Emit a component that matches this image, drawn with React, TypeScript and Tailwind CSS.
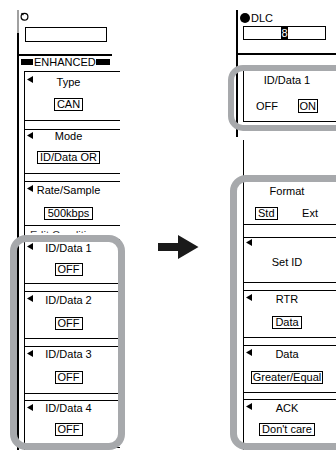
import React from "react";

function Tri({ top = "top-[3px]" }: { top?: string }) {
  return (
    <svg width="6" height="7" viewBox="0 0 6 7" className={`absolute left-[2px] ${top}`}>
      <polygon points="0,3.5 6,0 6,7" fill="#000" />
    </svg>
  );
}

type BoxProps = {
  title: string;
  value: string;
  h: string;
  mt?: string;
  titleMt?: string;
  valueMt?: string;
  tri?: boolean;
  triTop?: string;
  pr?: string;
  valuePx?: string;
};

function MenuBox({
  title,
  value,
  h,
  mt = "",
  titleMt = "mt-[2px]",
  valueMt = "mt-[10px]",
  tri = true,
  triTop = "top-[3px]",
  pr = "pr-[8px]",
  valuePx = "px-[2px]",
}: BoxProps) {
  return (
    <div className={`relative shrink-0 border-y border-black flex flex-col items-center ${h} ${mt} ${pr}`}>
      {tri && <Tri top={triTop} />}
      <div className={`h-[13px] leading-[13px] whitespace-nowrap ${titleMt}`}>{title}</div>
      <div
        className={`h-[13px] border border-black leading-[11px] flex items-center whitespace-nowrap ${valuePx} ${valueMt}`}
      >
        {value}
      </div>
    </div>
  );
}

export default function App() {
  return (
    <div className="relative w-[336px] h-[450px] overflow-hidden bg-white text-black text-[11px] flex font-['Liberation_Sans',Arial,sans-serif]">
      {/* LEFT PANEL */}
      <div className="ml-[17px] w-[103px] h-full pt-[10px] flex shrink-0">
        <div className="w-[2px] flex flex-col shrink-0">
          <div className="h-[23px] bg-[#a0a0a0]" />
          <div className="flex-1 bg-black" />
        </div>
        <div className="w-[101px] flex flex-col">
          <svg width="9" height="9" viewBox="0 0 9 9" className="mt-[2px] ml-[1px] shrink-0">
            <circle cx="4.5" cy="4.8" r="3.4" fill="none" stroke="#000" strokeWidth="1.2" />
            <line x1="1.6" y1="1.2" x2="3.4" y2="3.2" stroke="#000" strokeWidth="1.2" />
          </svg>
          <div className="mt-[6px] ml-[6px] w-[82px] h-[15px] border border-black shrink-0" />
          <div className="mt-[12px] w-[93px] h-[2px] bg-black shrink-0" />
          <div className="ml-[2px] h-[12px] flex items-center shrink-0">
            <div className="w-[12px] h-[6px] bg-black" />
            <span className="ml-[1px] leading-none whitespace-nowrap">ENHANCED</span>
            <div className="w-[14px] h-[6px] bg-black" />
          </div>
          <div className="mt-[3px] ml-[5px] flex-1 border-l border-black flex flex-col">
            <MenuBox title="Type" value="CAN" h="h-[50px]" titleMt="mt-[4px]" valueMt="mt-[9px]" triTop="top-[4px]" />
            <MenuBox title="Mode" value="ID/Data OR" h="h-[45px]" mt="mt-[8px]" titleMt="mt-0" valueMt="mt-[8px]" triTop="top-[2px]" />
            <MenuBox title="Rate/Sample" value="500kbps" h="h-[45px]" mt="mt-[7px]" valuePx="px-[3px]" />
            <div className="mt-[4px] h-[3px] overflow-hidden shrink-0">
              <div className="ml-[5px] leading-[11px] text-[#333] whitespace-nowrap">Edit Condition</div>
            </div>
            <MenuBox title="ID/Data 1" value="OFF" h="h-[45px]" mt="mt-[6px]" valueMt="mt-[8px]" />
            <MenuBox title="ID/Data 2" value="OFF" h="h-[48px]" mt="mt-[7px]" />
            <MenuBox title="ID/Data 3" value="OFF" h="h-[48px]" mt="mt-[7px]" titleMt="mt-[1px]" />
            <MenuBox title="ID/Data 4" value="OFF" h="h-[48px]" mt="mt-[6px]" titleMt="mt-[1px]" valueMt="mt-[8px]" />
          </div>
        </div>
      </div>

      {/* ARROW */}
      <div className="w-[116px] shrink-0 pt-[235px] pl-[38px]">
        <svg width="41" height="24" viewBox="0 0 41 24">
          <polygon points="0,8 20,8 20,0 40.5,12 20,24 20,16 0,16" fill="#1a1a1a" />
        </svg>
      </div>

      {/* RIGHT PANEL */}
      <div className="w-[100px] h-full pt-[10px] flex shrink-0">
        <div className="w-[2px] h-[127px] bg-black shrink-0" />
        <div className="w-[98px] flex flex-col">
          <div className="mt-[3px] ml-[2px] h-[10px] flex items-center shrink-0">
            <div className="w-[10px] h-[10px] rounded-full bg-black" />
            <span className="ml-[1px] leading-none">DLC</span>
          </div>
          <div className="mt-[3px] ml-[5px] w-[83px] h-[14px] border border-black flex justify-center shrink-0">
            <span className="bg-black text-white w-[7px] h-full leading-[12px] text-center">8</span>
          </div>
          <div className="mt-[13px] h-[2px] bg-black shrink-0" />

          {/* ID/Data 1 */}
          <div className="mt-[14px] ml-[5px] h-[53px] border-l border-y border-black flex flex-col shrink-0">
            <div className="mt-[4px] h-[13px] leading-[13px] text-center pr-[6px]">ID/Data 1</div>
            <div className="mt-[12px] flex items-center justify-between pl-[12px] pr-[18px]">
              <span className="leading-[14px]">OFF</span>
              <span className="h-[14px] border border-black px-[1px] leading-[12px] flex items-center">ON</span>
            </div>
          </div>

          <div className="mt-[18px] ml-[5px] flex-1 border-l border-black flex flex-col">
            {/* Format */}
            <div className="mt-[40px] h-[45px] border-y border-black flex flex-col shrink-0">
              <div className="mt-[4px] h-[13px] leading-[13px] text-center pr-[6px]">Format</div>
              <div className="mt-[9px] flex items-center justify-between pl-[11px] pr-[18px]">
                <span className="h-[13px] border border-black px-[2px] leading-[11px] flex items-center">Std</span>
                <span className="leading-[13px]">Ext</span>
              </div>
            </div>
            {/* Set ID */}
            <div className="relative mt-[12px] h-[46px] border-y border-black flex items-center justify-center pt-[4px] pr-[6px] shrink-0">
              <Tri top="top-[1px]" />
              <span>Set ID</span>
            </div>
            <MenuBox title="RTR" value="Data" h="h-[48px]" mt="mt-[7px]" pr="pr-[6px]" />
            <MenuBox title="Data" value="Greater/Equal" h="h-[48px]" mt="mt-[7px]" pr="pr-[6px]" valuePx="px-[1px]" />
            <MenuBox title="ACK" value="Don't care" h="h-[48px]" mt="mt-[6px]" pr="pr-[6px]" valueMt="mt-[8px]" />
          </div>
        </div>
      </div>

      {/* Highlight rings (overlay) */}
      <div className="pointer-events-none absolute left-[10px] top-[235px] w-[115px] h-[215px] border-[7px] border-[#a7a9ac] rounded-[16px]" />
      <div className="pointer-events-none absolute left-[228px] top-[65px] w-[130px] h-[66px] border-[6px] border-[#a7a9ac] rounded-[15px]" />
      <div className="pointer-events-none absolute left-[230px] top-[175px] w-[130px] h-[275px] border-[7px] border-[#a7a9ac] rounded-[16px]" />
    </div>
  );
}
